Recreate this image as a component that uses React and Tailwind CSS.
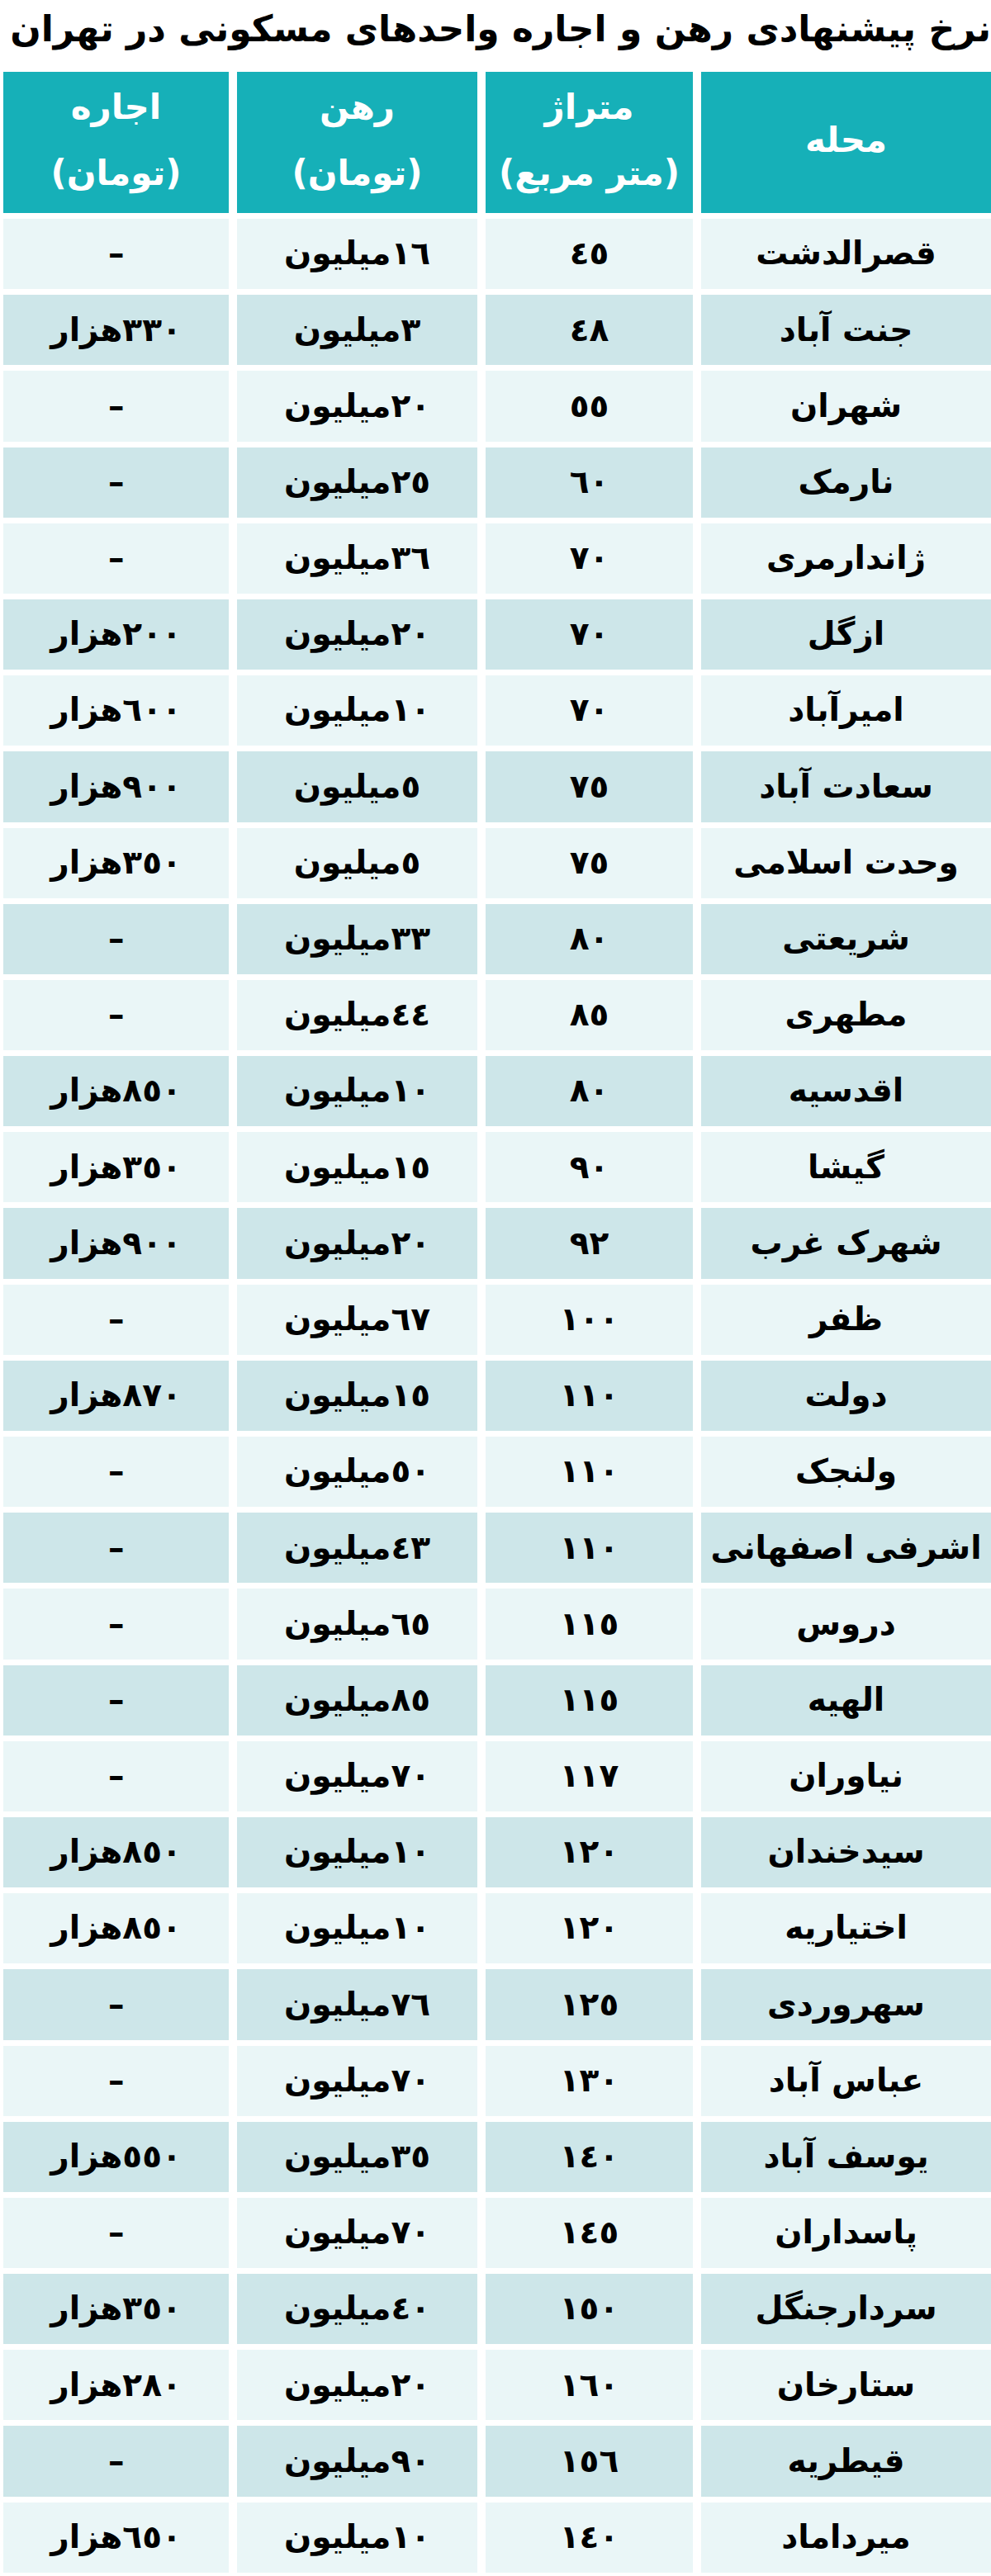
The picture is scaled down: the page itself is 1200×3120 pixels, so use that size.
const rows = [
  ["قصرالدشت", "٤٥", "١٦میلیون", "–"],
  ["جنت آباد", "٤٨", "٣میلیون", "٣٣٠هزار"],
  ["شهران", "٥٥", "٢٠میلیون", "–"],
  ["نارمک", "٦٠", "٢٥میلیون", "–"],
  ["ژاندارمری", "٧٠", "٣٦میلیون", "–"],
  ["ازگل", "٧٠", "٢٠میلیون", "٢٠٠هزار"],
  ["امیرآباد", "٧٠", "١٠میلیون", "٦٠٠هزار"],
  ["سعادت آباد", "٧٥", "٥میلیون", "٩٠٠هزار"],
  ["وحدت اسلامی", "٧٥", "٥میلیون", "٣٥٠هزار"],
  ["شریعتی", "٨٠", "٣٣میلیون", "–"],
  ["مطهری", "٨٥", "٤٤میلیون", "–"],
  ["اقدسیه", "٨٠", "١٠میلیون", "٨٥٠هزار"],
  ["گیشا", "٩٠", "١٥میلیون", "٣٥٠هزار"],
  ["شهرک غرب", "٩٢", "٢٠میلیون", "٩٠٠هزار"],
  ["ظفر", "١٠٠", "٦٧میلیون", "–"],
  ["دولت", "١١٠", "١٥میلیون", "٨٧٠هزار"],
  ["ولنجک", "١١٠", "٥٠میلیون", "–"],
  ["اشرفی اصفهانی", "١١٠", "٤٣میلیون", "–"],
  ["دروس", "١١٥", "٦٥میلیون", "–"],
  ["الهیه", "١١٥", "٨٥میلیون", "–"],
  ["نیاوران", "١١٧", "٧٠میلیون", "–"],
  ["سیدخندان", "١٢٠", "١٠میلیون", "٨٥٠هزار"],
  ["اختیاریه", "١٢٠", "١٠میلیون", "٨٥٠هزار"],
  ["سهروردی", "١٢٥", "٧٦میلیون", "–"],
  ["عباس آباد", "١٣٠", "٧٠میلیون", "–"],
  ["یوسف آباد", "١٤٠", "٣٥میلیون", "٥٥٠هزار"],
  ["پاسداران", "١٤٥", "٧٠میلیون", "–"],
  ["سردارجنگل", "١٥٠", "٤٠میلیون", "٣٥٠هزار"],
  ["ستارخان", "١٦٠", "٢٠میلیون", "٢٨٠هزار"],
  ["قیطریه", "١٥٦", "٩٠میلیون", "–"],
  ["میرداماد", "١٤٠", "١٠میلیون", "٦٥٠هزار"],
];

const headers = [
  ["محله"],
  ["متراژ", "(متر مربع)"],
  ["رهن", "(تومان)"],
  ["اجاره", "(تومان)"],
];

export default function App() {
  return (
    <div
      dir="rtl"
      className="w-[1200px] bg-white overflow-hidden font-['DejaVu_Sans',sans-serif] font-bold text-black"
    >
      {/* Title */}
      <div className="h-[87px] flex items-start">
        <h1 className="whitespace-nowrap text-[44px] leading-[70px] tracking-[-1.5px]">
          نرخ پیشنهادی رهن و اجاره واحدهای مسکونی در تهران
        </h1>
      </div>

      {/* Table */}
      <div className="grid grid-cols-[351px_251px_291px_273px] grid-rows-[171px] auto-rows-[85.2px] gap-x-[10px] gap-y-[7px] pl-[4px]">
        {headers.map((h, i) => (
          <div
            key={i}
            className="bg-[#16b0b8] text-white flex flex-col items-center justify-center text-[42px] leading-[80px] pb-[6px]"
          >
            {h.map((line, j) => (
              <span key={j}>{line}</span>
            ))}
          </div>
        ))}
        {rows.map((r, i) =>
          r.map((cell, j) => (
            <div
              key={i + "-" + j}
              className={
                "flex items-center justify-center whitespace-nowrap text-[39px] tracking-[-0.5px] " +
                (i % 2 === 1 ? "bg-[#cde6e9]" : "bg-[#eaf6f7]")
              }
            >
              {cell}
            </div>
          ))
        )}
      </div>
    </div>
  );
}
